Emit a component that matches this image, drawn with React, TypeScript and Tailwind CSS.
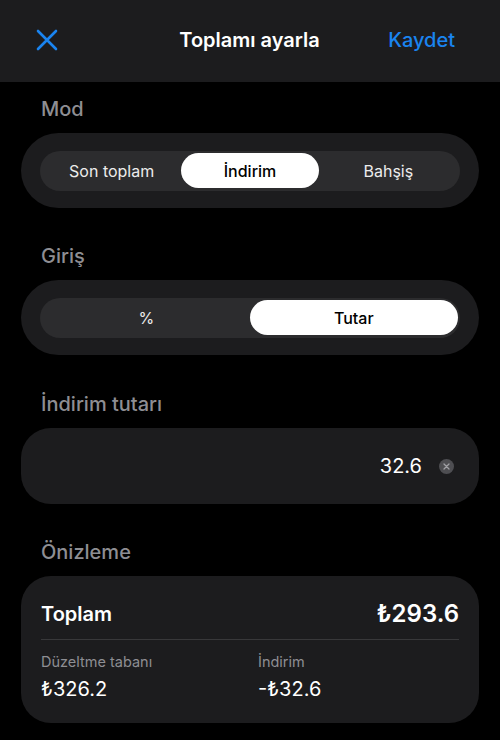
import { useState } from "react";

const font = { fontFamily: 'Inter, "Noto Sans", "DejaVu Sans", sans-serif' };

function Segmented({
  options,
  value,
  onChange,
}: {
  options: string[];
  value: number;
  onChange: (i: number) => void;
}) {
  return (
    <div className="flex h-10 w-full rounded-full bg-[#2c2c2e] p-[2.5px]">
      {options.map((opt, i) => (
        <button
          key={opt}
          onClick={() => onChange(i)}
          className={
            i === value
              ? "flex-1 rounded-full bg-white text-[16px] font-medium text-black"
              : "flex-1 rounded-full text-[16px] text-[#ececec]"
          }
        >
          {opt}
        </button>
      ))}
    </div>
  );
}

function SectionLabel({ children }: { children: string }) {
  return (
    <div className="px-[41px] pb-[10px] text-[20px] leading-[28px] font-medium text-[#8e8e93]">
      {children}
    </div>
  );
}

export default function App() {
  const [mode, setMode] = useState(1);
  const [input, setInput] = useState(1);

  return (
    <div className="h-[740px] w-[500px] overflow-hidden bg-black text-white" style={font}>
      {/* nav bar */}
      <div className="flex h-[82px] items-center bg-[#1c1c1e] px-[36px] pb-[2px]">
        <div className="flex-1">
          <svg width="22" height="22" viewBox="0 0 22 22" fill="none">
            <path d="M2 2L20 20M20 2L2 20" stroke="#1a84f0" strokeWidth="2.6" strokeLinecap="round" />
          </svg>
        </div>
        <div className="ml-[8px] text-[20px] font-semibold">Toplamı ayarla</div>
        <div className="flex flex-1 justify-end pr-[9px] text-[20px] font-medium text-[#1a84f0]">
          Kaydet
        </div>
      </div>

      <div className="pt-[13px]">
        <SectionLabel>Mod</SectionLabel>
        <div className="mx-[21px] flex h-[75px] items-center rounded-[38px] bg-[#1c1c1e] px-[19px]">
          <Segmented options={["Son toplam", "İndirim", "Bahşiş"]} value={mode} onChange={setMode} />
        </div>

        <div className="pt-[34px]">
          <SectionLabel>Giriş</SectionLabel>
        </div>
        <div className="mx-[21px] flex h-[75px] items-center rounded-[38px] bg-[#1c1c1e] px-[19px]">
          <Segmented options={["%", "Tutar"]} value={input} onChange={setInput} />
        </div>

        <div className="pt-[35px]">
          <SectionLabel>İndirim tutarı</SectionLabel>
        </div>
        <div className="mx-[21px] flex h-[76px] items-center justify-end gap-[17px] rounded-[30px] bg-[#1c1c1e] pr-[25px]">
          <span className="text-[20px]">32.6</span>
          <span className="flex h-[15px] w-[15px] items-center justify-center rounded-full bg-[#4e4e52]">
            <svg width="7" height="7" viewBox="0 0 7 7">
              <path d="M1 1L6 6M6 1L1 6" stroke="#a0a0a5" strokeWidth="1.3" strokeLinecap="round" />
            </svg>
          </span>
        </div>

        <div className="pt-[34px]">
          <SectionLabel>Önizleme</SectionLabel>
        </div>
        <div className="mx-[21px] rounded-[30px] bg-[#1c1c1e] px-[20px] pt-[20px] pb-[21px]">
          <div className="flex h-[36px] items-center justify-between">
            <span className="text-[20px] font-semibold">Toplam</span>
            <span className="text-[24px] font-semibold">₺293.6</span>
          </div>
          <div className="mt-[7px] h-px bg-[#38383a]" />
          <div className="grid grid-cols-2 pt-[12px]">
            <div>
              <div className="text-[14.5px] leading-[20px] text-[#8e8e93]">Düzeltme tabanı</div>
              <div className="pt-[4px] text-[20px] leading-[26px]">₺326.2</div>
            </div>
            <div className="pl-[8px]">
              <div className="text-[14.5px] leading-[20px] text-[#8e8e93]">İndirim</div>
              <div className="pt-[4px] text-[20px] leading-[26px]">-₺32.6</div>
            </div>
          </div>
        </div>
      </div>
    </div>
  );
}
